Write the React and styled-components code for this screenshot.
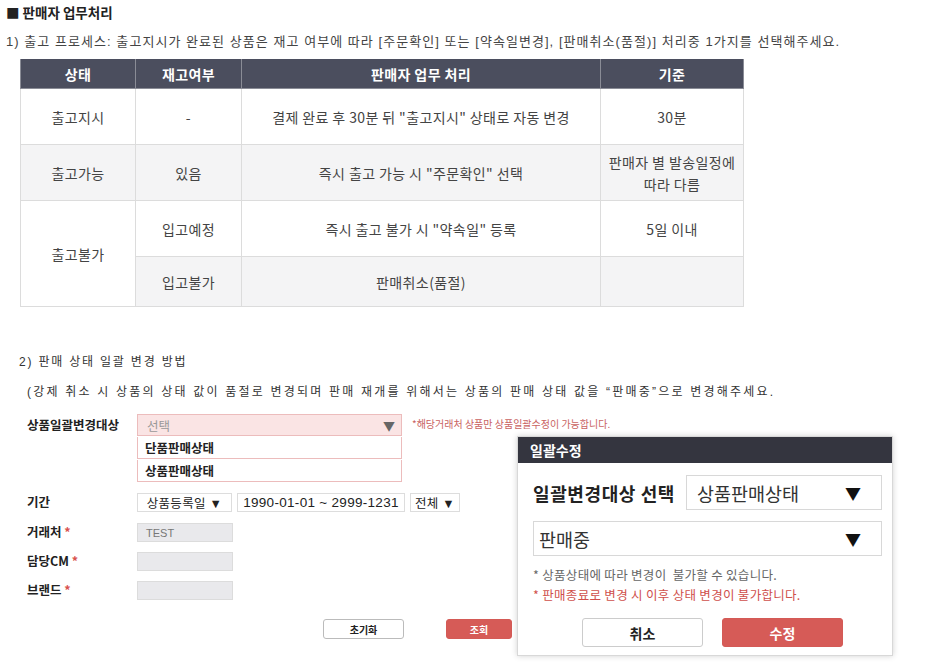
import React from "react";
import styled, { createGlobalStyle } from "styled-components";

const GlobalStyle = createGlobalStyle`
  html, body {
    margin: 0;
    padding: 0;
    background: #fff;
  }
  body {
    font-family: "Liberation Sans", "Noto Sans CJK KR", sans-serif;
    color: #333;
  }
`;

const rows = [
  { state: "출고지시", stock: "-", task: '결제 완료 후 30분 뒤 "출고지시" 상태로 자동 변경', base: "30분" },
  { state: "출고가능", stock: "있음", task: '즉시 출고 가능 시 "주문확인" 선택', base: "판매자 별 발송일정에\n따라 다름", shade: true },
];

export default function App() {
  return (
    <>
      <GlobalStyle />
      <Page>
        <Title>■ 판매자 업무처리</Title>
        <Lead>
          1) 출고 프로세스: 출고지시가 완료된 상품은 재고 여부에 따라 [주문확인] 또는 [약속일변경], [판매취소(품절)] 처리중 1가지를 선택해주세요.
        </Lead>

        <Table>
          <colgroup>
            <col style={{ width: 115 }} />
            <col style={{ width: 106 }} />
            <col style={{ width: 359 }} />
            <col style={{ width: 143 }} />
          </colgroup>
          <thead>
            <tr>
              <Th>상태</Th>
              <Th>재고여부</Th>
              <Th>판매자 업무 처리</Th>
              <Th>기준</Th>
            </tr>
          </thead>
          <tbody>
            {rows.map((r) => (
              <tr key={r.state}>
                <Td $shade={r.shade} $h={56}>{r.state}</Td>
                <Td $shade={r.shade}>{r.stock}</Td>
                <Td $shade={r.shade}>{r.task}</Td>
                <Td $shade={r.shade}>{r.base}</Td>
              </tr>
            ))}
            <tr>
              <Td rowSpan={2}>출고불가</Td>
              <Td $h={56}>입고예정</Td>
              <Td>즉시 출고 불가 시 "약속일" 등록</Td>
              <Td>5일 이내</Td>
            </tr>
            <tr>
              <Td $shade $h={50}>입고불가</Td>
              <Td $shade>판매취소(품절)</Td>
              <Td $shade></Td>
            </tr>
          </tbody>
        </Table>

        <SubTitle>2) 판매 상태 일괄 변경 방법</SubTitle>
        <Note>(강제 취소 시 상품의 상태 값이 품절로 변경되며 판매 재개를 위해서는 상품의 판매 상태 값을 “판매중”으로 변경해주세요.</Note>

        <Form>
          <Label $top={2}>상품일괄변경대상</Label>
          <TargetField>
            <PinkSelect>
              <span>선택</span>
              <Arrow>▼</Arrow>
            </PinkSelect>
            <Option>단품판매상태</Option>
            <Option>상품판매상태</Option>
          </TargetField>
          <Hint>*해당거래처 상품만 상품일괄수정이 가능합니다.</Hint>

          <Label $top={1}>기간</Label>
          <Inline $top={1}>
            <SmallBox $w={95}>상품등록일 ▼</SmallBox>
            <SmallBox $w={168} $center $big>1990-01-01 ~ 2999-1231</SmallBox>
            <SmallBox $w={50} $pad={3}>전체 ▼</SmallBox>
          </Inline>
          <span />

          <Label $top={1}>거래처 <Req>*</Req></Label>
          <GreyInput $top={1}>TEST</GreyInput>
          <span />

          <Label>담당CM <Req>*</Req></Label>
          <GreyInput />
          <span />

          <Label>브랜드 <Req>*</Req></Label>
          <GreyInput />
          <span />
        </Form>

        <Buttons>
          <SmallButton>초기화</SmallButton>
          <SmallButton $primary>조회</SmallButton>
        </Buttons>

        <Modal>
          <ModalHead>일괄수정</ModalHead>
          <ModalBody>
            <ModalRow>
              <ModalLabel>일괄변경대상 선택</ModalLabel>
              <BigSelect $w={196}>
                <span>상품판매상태</span>
                <BigArrow>▼</BigArrow>
              </BigSelect>
            </ModalRow>
            <BigSelect>
              <span>판매중</span>
              <BigArrow>▼</BigArrow>
            </BigSelect>
            <Notes>
              <NoteLine>* 상품상태에 따라 변경이 &nbsp;불가할 수 있습니다.</NoteLine>
              <NoteLine $red>* 판매종료로 변경 시 이후 상태 변경이 불가합니다.</NoteLine>
            </Notes>
            <ModalButtons>
              <ModalButton>취소</ModalButton>
              <ModalButton $primary>수정</ModalButton>
            </ModalButtons>
          </ModalBody>
        </Modal>
      </Page>
    </>
  );
}

const Page = styled.div`
  position: relative;
  width: 952px;
  height: 672px;
  padding: 4px 6px 0;
  box-sizing: border-box;
  overflow: hidden;
`;

const Title = styled.div`
  font-family: "Noto Sans CJK KR", sans-serif;
  font-size: 13.5px;
  font-weight: 700;
  line-height: 16px;
  color: #222;
`;

const Lead = styled.div`
  margin-top: 14px;
  font-size: 13px;
  line-height: 16px;
  color: #444;
  white-space: nowrap;
  letter-spacing: 1.05px;
`;

const Table = styled.table`
  margin: 9px 0 0 14px;
  border-collapse: collapse;
  table-layout: fixed;
  width: 723px;
  font-family: "Noto Sans CJK KR", sans-serif;
  font-size: 14px;
  letter-spacing: 0.4px;
`;

const Th = styled.th`
  height: 29px;
  padding: 0;
  background: #4b4e5e;
  color: #fff;
  font-weight: 700;
  border: 1px solid #8a8c96;
  border-top: none;
  text-align: center;
`;

const Td = styled.td`
  height: ${(p) => (p.$h ? `${p.$h - 1}px` : "auto")};
  padding: 0 4px;
  text-align: center;
  color: #444;
  line-height: 22px;
  white-space: pre-line;
  background: ${(p) => (p.$shade ? "#f4f4f5" : "#fff")};
  border: 1px solid #dcdcdc;
`;

const SubTitle = styled.div`
  margin: 47px 0 0 13px;
  font-size: 12px;
  line-height: 16px;
  color: #333;
  letter-spacing: 1.8px;
`;

const Note = styled.div`
  margin: 14px 0 0 21px;
  font-size: 12px;
  line-height: 16px;
  color: #333;
  letter-spacing: 2.2px;
  white-space: nowrap;
`;

const Form = styled.div`
  margin: 14px 0 0 21px;
  display: grid;
  grid-template-columns: 110px 276px 1fr;
  row-gap: 10px;
  align-items: start;
`;

const Label = styled.div`
  margin-top: ${(p) => p.$top || 0}px;
  font-family: "Noto Sans CJK KR", sans-serif;
  font-size: 12.5px;
  font-weight: 700;
  line-height: 18px;
  color: #222;
`;

const Req = styled.span`
  color: #d9534f;
`;

const TargetField = styled.div`
  width: 265px;
  display: flex;
  flex-direction: column;
`;

const PinkSelect = styled.div`
  height: 22px;
  box-sizing: border-box;
  padding: 0 6px 0 9px;
  display: flex;
  align-items: center;
  justify-content: space-between;
  background: #fae4e4;
  border: 1px solid #ecbcbc;
  font-family: "Noto Sans CJK KR", sans-serif;
  font-size: 12.5px;
  color: #999;
`;

const Arrow = styled.span`
  color: #666;
  font-size: 12px;
`;

const Option = styled.div`
  height: 22px;
  box-sizing: border-box;
  padding: 0 7px;
  display: flex;
  align-items: center;
  border: 1px solid #ecbcbc;
  border-top: 0;
  margin-top: 1px;
  font-family: "Noto Sans CJK KR", sans-serif;
  font-size: 12.5px;
  font-weight: 700;
  color: #222;
  background: #fff;
`;

const Hint = styled.div`
  margin: 1px 0 0 -1px;
  font-family: "Noto Sans CJK KR", sans-serif;
  font-size: 10px;
  line-height: 18px;
  color: #c9625f;
`;

const Inline = styled.div`
  margin-top: ${(p) => p.$top || 0}px;
  display: flex;
  gap: 5px;
  white-space: nowrap;
`;

const SmallBox = styled.div`
  width: ${(p) => p.$w}px;
  height: 19px;
  box-sizing: border-box;
  flex-shrink: 0;
  padding: 0 ${(p) => (p.$center ? 0 : p.$pad ?? 8)}px;
  display: flex;
  align-items: center;
  justify-content: center;
  border: 1px solid #ddd;
  font-family: "Liberation Sans", "Noto Sans CJK KR", sans-serif;
  font-size: ${(p) => (p.$big ? 13.5 : 12.5)}px;
  color: #222;
  letter-spacing: 0.3px;
`;

const GreyInput = styled.div`
  margin-top: ${(p) => p.$top || 0}px;
  width: 96px;
  height: 19px;
  box-sizing: border-box;
  padding: 0 8px;
  display: flex;
  align-items: center;
  background: #e9e9ec;
  border: 1px solid #dcdcdc;
  font-size: 11px;
  color: #777;
`;

const Buttons = styled.div`
  margin: 19px 0 0 317px;
  display: flex;
  gap: 42px;
`;

const SmallButton = styled.div`
  width: ${(p) => (p.$primary ? 66 : 81)}px;
  height: 20px;
  box-sizing: border-box;
  display: flex;
  align-items: center;
  justify-content: center;
  border-radius: 3px;
  border: 1px solid ${(p) => (p.$primary ? "#d45a56" : "#bbb")};
  background: ${(p) => (p.$primary ? "#d65b57" : "#fff")};
  color: ${(p) => (p.$primary ? "#fff" : "#222")};
  font-family: "Noto Sans CJK KR", sans-serif;
  font-size: 10px;
  font-weight: 700;
`;

const Modal = styled.div`
  position: absolute;
  left: 517px;
  top: 436px;
  width: 376px;
  height: 220px;
  box-sizing: border-box;
  background: #fff;
  border: 1px solid #d8d8d8;
  box-shadow: 0 0 6px rgba(0, 0, 0, 0.18);
  display: flex;
  flex-direction: column;
`;

const ModalHead = styled.div`
  height: 26px;
  padding: 0 12px;
  display: flex;
  align-items: center;
  background: #34353f;
  color: #fff;
  font-family: "Noto Sans CJK KR", sans-serif;
  font-size: 14px;
  font-weight: 700;
`;

const ModalBody = styled.div`
  padding: 12px 10px 0 15px;
  display: flex;
  flex-direction: column;
`;

const ModalRow = styled.div`
  display: flex;
  align-items: center;
  justify-content: space-between;
  margin-bottom: 11px;
`;

const ModalLabel = styled.div`
  font-family: "Noto Sans CJK KR", sans-serif;
  font-size: 18px;
  font-weight: 700;
  letter-spacing: 0.6px;
  color: #222;
`;

const BigSelect = styled.div`
  width: ${(p) => (p.$w ? `${p.$w}px` : "100%")};
  height: 35px;
  box-sizing: border-box;
  padding: 0 20px 0 ${(p) => (p.$w ? 10 : 5)}px;
  display: flex;
  align-items: center;
  justify-content: space-between;
  border: 1px solid #d8d8d8;
  font-family: "Noto Sans CJK KR", sans-serif;
  font-size: 18.5px;
  color: #333;
`;

const BigArrow = styled.span`
  font-size: 16px;
  color: #111;
`;

const Notes = styled.div`
  margin-top: 11px;
  display: flex;
  flex-direction: column;
  gap: 4px;
`;

const NoteLine = styled.div`
  font-family: "Noto Sans CJK KR", sans-serif;
  font-size: 12.5px;
  letter-spacing: 0.3px;
  line-height: 16px;
  color: ${(p) => (p.$red ? "#cf4f4b" : "#666")};
`;

const ModalButtons = styled.div`
  margin: 15px 0 0 10px;
  display: flex;
  justify-content: center;
  gap: 19px;
`;

const ModalButton = styled.div`
  width: 121px;
  height: 29px;
  box-sizing: border-box;
  display: flex;
  align-items: center;
  justify-content: center;
  border-radius: 3px;
  border: 1px solid ${(p) => (p.$primary ? "#d45a56" : "#ccc")};
  background: ${(p) => (p.$primary ? "#d65b57" : "#fff")};
  color: ${(p) => (p.$primary ? "#fff" : "#222")};
  font-family: "Noto Sans CJK KR", sans-serif;
  font-size: 14px;
  font-weight: 700;
`;
